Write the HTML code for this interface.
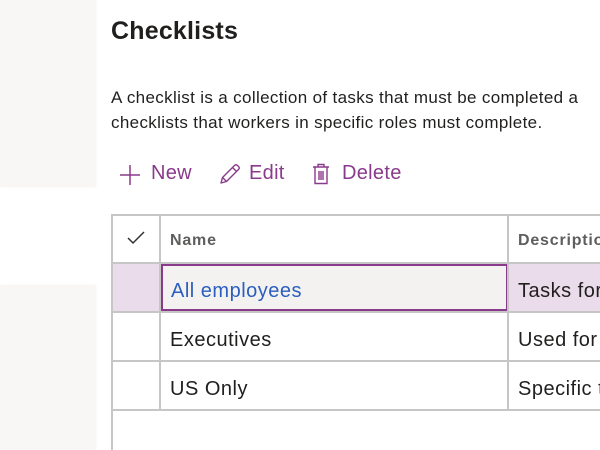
<!DOCTYPE html>
<html><head><style>
*{margin:0;padding:0;box-sizing:border-box}
body{width:600px;height:450px;overflow:hidden;background:#fff;font-family:"Segoe UI","Liberation Sans",sans-serif;position:relative;color:#201f1e}
.g{position:absolute;left:0;width:95px;background:#f8f7f6;box-shadow:1px 0 2px rgba(0,0,0,.05)}
h1{position:absolute;left:111px;top:17px;font-size:25px;font-weight:bold;color:#201f1e;letter-spacing:0.2px}
.desc{position:absolute;left:111px;top:85px;font-size:17px;letter-spacing:0.35px;line-height:25px;white-space:nowrap;color:#201f1e}
.tb{position:absolute;top:162px;left:119px;font-size:20px;letter-spacing:0.3px;color:#8a3a8c;white-space:nowrap}
.tb span{position:absolute;top:0}
.tb svg{position:absolute}
.v{position:absolute;background:#c8c6c4}
.t{position:absolute;font-size:20px;letter-spacing:0.5px;white-space:nowrap}
</style></head><body>
<div class="g" style="top:0;height:187px"></div>
<div class="g" style="top:285px;height:165px"></div>
<h1>Checklists</h1>
<div class="desc">A checklist is a collection of tasks that must be completed a<br>checklists that workers in specific roles must complete.</div>
<div class="tb">
<svg style="left:0;top:2px" width="22" height="22" viewBox="0 0 22 22"><path d="M11 1V21M1 11H21" stroke="#8a3a8c" stroke-width="1.5" fill="none"/></svg>
<span style="left:32px">New</span>
<svg style="left:100px;top:1px" width="22" height="22" viewBox="0 0 22 22"><path d="M2 20L3.5 14.5L15.5 2.5Q17 1 18.5 2.5L19.5 3.5Q21 5 19.5 6.5L7.5 18.5Z M13.5 4.5L17.5 8.5 M3.5 14.5L7.5 18.5" stroke="#8a3a8c" stroke-width="1.4" fill="none" stroke-linejoin="round"/></svg>
<span style="left:130px">Edit</span>
<svg style="left:193px;top:1px" width="18" height="22" viewBox="0 0 18 22"><path d="M1 4H17M6 4V1.5H12V4M3 4V20.5H15V4M7 8V17M9 8V17M11 8V17" stroke="#8a3a8c" stroke-width="1.4" fill="none"/></svg>
<span style="left:223px">Delete</span>
</div>
<div style="position:absolute;left:111px;top:263px;width:489px;height:49px;background:#eadcea"></div>
<div style="position:absolute;left:161px;top:264px;width:347px;height:47px;background:#f3f2f1;border:2px solid #8a3a8c"></div>
<div class="v" style="left:111px;top:214px;width:489px;height:2px"></div>
<div class="v" style="left:111px;top:214px;width:2px;height:236px"></div>
<div class="v" style="left:159px;top:214px;width:2px;height:196px"></div>
<div class="v" style="left:507px;top:214px;width:2px;height:196px"></div>
<div class="v" style="left:111px;top:262px;width:489px;height:2px"></div>
<div class="v" style="left:111px;top:311px;width:489px;height:2px"></div>
<div class="v" style="left:111px;top:360px;width:489px;height:2px"></div>
<div class="v" style="left:111px;top:409px;width:489px;height:2px"></div>
<svg style="position:absolute;left:127px;top:231px" width="18" height="14" viewBox="0 0 18 14"><path d="M1 7L6 12L17 1" stroke="#323130" stroke-width="1.5" fill="none"/></svg>
<div class="t" style="left:170px;top:232px;font-size:16px;letter-spacing:0.8px;color:#605e5c;font-weight:bold">Name</div>
<div class="t" style="left:518px;top:232px;font-size:16px;letter-spacing:0.8px;color:#605e5c;font-weight:bold">Description</div>
<div class="t" style="left:171px;top:280px;color:#2b5ebf">All employees</div>
<div class="t" style="left:518px;top:280px">Tasks for all</div>
<div class="t" style="left:170px;top:329px">Executives</div>
<div class="t" style="left:518px;top:329px">Used for</div>
<div class="t" style="left:170px;top:378px">US Only</div>
<div class="t" style="left:518px;top:378px">Specific to</div>
</body></html>
